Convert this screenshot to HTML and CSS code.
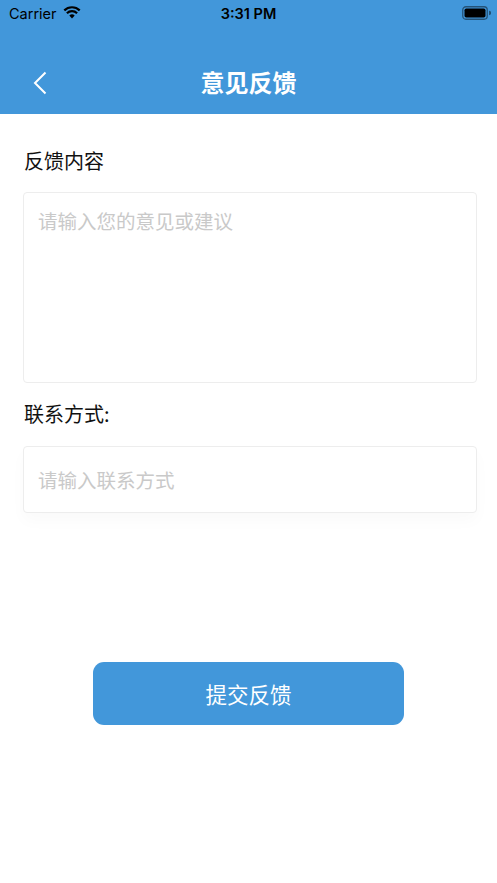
FILE: index.html
```html
<!DOCTYPE html>
<html lang="zh-CN">
<head>
<meta charset="utf-8">
<title>意见反馈</title>
<link rel="stylesheet" href="styles.css">
</head>
<body>
<header class="header">
  <div class="status">
    <div class="status-left">
      <span class="carrier">Carrier</span>
      <svg class="wifi" width="18" height="13" viewBox="0 0 18 13">
        <path d="M9 12.5 L6.3 9.6 A3.9 3.9 0 0 1 11.7 9.6 Z" fill="#000"/>
        <path d="M3.9 7.2 A7.3 7.3 0 0 1 14.1 7.2" fill="none" stroke="#000" stroke-width="2.2"/>
        <path d="M1.3 4.4 A11 11 0 0 1 16.7 4.4" fill="none" stroke="#000" stroke-width="2.2"/>
      </svg>
    </div>
    <div class="time">3:31 PM</div>
    <div class="status-right">
      <svg width="29" height="14" viewBox="0 0 29 14">
        <rect x="0.75" y="0.75" width="24.5" height="12.5" rx="3.2" fill="none" stroke="#000" stroke-opacity="0.45" stroke-width="1.3"/>
        <rect x="2.5" y="2.5" width="21" height="9" rx="1.8" fill="#000"/>
        <path d="M27 4.8 A2.2 2.2 0 0 1 27 9.2 Z" fill="#000" fill-opacity="0.45"/>
      </svg>
    </div>
  </div>
  <div class="nav">
    <svg class="back" width="16" height="24" viewBox="0 0 16 24">
      <path d="M13.5 1.5 L3 12 L13.5 22.5" fill="none" stroke="#fff" stroke-width="2"/>
    </svg>
    <h1 class="title">意见反馈</h1>
  </div>
</header>
<main class="content">
  <div class="label label-first">反馈内容</div>
  <div class="box box-large"><span class="placeholder">请输入您的意见或建议</span></div>
  <div class="label label-second">联系方式:</div>
  <div class="box box-small"><span class="placeholder">请输入联系方式</span></div>
  <div class="actions">
    <button class="submit">提交反馈</button>
  </div>
</main>
</body>
</html>
```
FILE: styles.css
```css
* { box-sizing: border-box; }
html, body { margin: 0; padding: 0; }
body {
  width: 497px;
  height: 883px;
  background: #fff;
  font-family: "Noto Sans CJK SC", "Noto Sans", sans-serif;
  overflow: hidden;
}
.header {
  background: #4297da;
  height: 114px;
  display: flex;
  flex-direction: column;
}
.status {
  height: 26px;
  display: flex;
  align-items: center;
  justify-content: space-between;
  padding: 0 6px 0 9px;
  position: relative;
  font-family: "Inter", "Liberation Sans", sans-serif;
  color: #000;
}
.status-left { display: flex; align-items: center; gap: 6px; }
.carrier { font-size: 14.5px; }
.wifi { margin-top: -2px; }
.time {
  position: absolute;
  left: 0; right: 0;
  text-align: center;
  font-size: 14.5px;
  font-weight: 600;
  pointer-events: none;
}
.status-right { display: flex; align-items: center; }
.nav {
  flex: 1;
  display: flex;
  align-items: center;
  justify-content: center;
  position: relative;
}
.back {
  position: absolute;
  left: 32px;
  top: 45px;
}
.title {
  margin: 0;
  color: #fff;
  font-size: 24px;
  font-weight: 700;
  line-height: 32px;
  margin-top: 24px;
}
.content {
  padding: 0 20px 0 23px;
  display: flex;
  flex-direction: column;
}
.label {
  font-size: 20px;
  color: #111;
  line-height: 26px;
  padding-left: 1px;
}
.label-first { margin-top: 34px; }
.label-second { margin-top: 18px; }
.box {
  width: 454px;
  border: 1px solid #ededed;
  border-radius: 4px;
  background: #fff;
  padding-left: 14px;
}
.box-large {
  height: 191px;
  margin-top: 18px;
  padding-top: 15px;
}
.box-small {
  height: 67px;
  margin-top: 19px;
  display: flex;
  align-items: center;
  box-shadow: 0 8px 16px rgba(0,0,0,0.025);
}
.placeholder {
  font-size: 19.5px;
  color: #c9c9c9;
  line-height: 26px;
}
.actions {
  display: flex;
  justify-content: center;
  margin-top: 149px;
  padding-right: 3px;
}
.submit {
  width: 311px;
  height: 63px;
  border: none;
  border-radius: 11px;
  background: #4297da;
  color: #fff;
  font-family: "Noto Sans CJK SC", "Noto Sans", sans-serif;
  font-size: 21.5px;
}
```
